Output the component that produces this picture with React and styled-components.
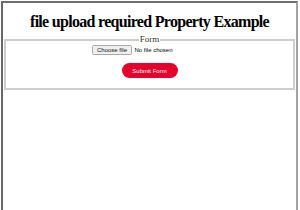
import React from "react";
import styled, { createGlobalStyle } from "styled-components";

const GlobalStyle = createGlobalStyle`
  html, body { margin: 0; padding: 0; background: #ffffff; overflow: hidden; }
  body { font-family: "Liberation Serif", "Times New Roman", serif; }
`;

const Frame = styled.div`
  margin: 1px 2px 0 1px;
  height: 209px;
  box-sizing: border-box;
  border-left: 2px solid #686868;
  border-top: 2px solid #6e6e6e;
  border-right: 2px solid #a3a3a3;
  padding: 0 1px;
`;

const Title = styled.h1`
  margin: 9px 0 3px;
  font-family: "Liberation Serif", "Times New Roman", serif;
  font-weight: 700;
  font-size: 16px;
  letter-spacing: -0.7px;
  line-height: 20px;
  text-align: center;
  white-space: nowrap;
  color: #000;
`;

const Fieldset = styled.fieldset`
  margin: 0;
  padding: 0 10px 10px;
  border: 2px solid #cdcdcd;
  font-size: 6px;
  line-height: 8px;
`;

const Legend = styled.legend`
  margin: 0 auto;
  padding: 0 1px;
  font-family: "Liberation Serif", "Times New Roman", serif;
  font-size: 9px;
  line-height: 9px;
  color: #333;
`;

const FileRow = styled.label`
  display: flex;
  justify-content: center;
  align-items: center;
  gap: 3px;
  margin-top: 1px;
  padding-right: 34px;
  font-family: "Liberation Sans", Arial, sans-serif;
  font-size: 6px;
  color: #000;
  cursor: pointer;
`;

const HiddenInput = styled.input`
  position: absolute;
  width: 1px;
  height: 1px;
  opacity: 0;
  overflow: hidden;
`;

const ChooseButton = styled.span`
  display: inline-block;
  box-sizing: border-box;
  height: 10px;
  line-height: 8px;
  padding: 0 3.5px;
  background: #efefef;
  border: 1px solid #a9a9a9;
  border-radius: 1.5px;
  color: #111;
`;

const SubmitButton = styled.button`
  display: block;
  margin: 8px auto 0;
  width: 56px;
  height: 15px;
  padding: 0;
  border: none;
  border-radius: 8px;
  background: #e6002c;
  color: #ffffff;
  font-family: "Liberation Sans", Arial, sans-serif;
  font-size: 6px;
`;

export default function App() {
  return (
    <>
      <GlobalStyle />
      <Frame>
        <Title>file upload required Property Example</Title>
        <form onSubmit={(e) => e.preventDefault()}>
          <Fieldset>
            <Legend>Form</Legend>
            <FileRow>
              <HiddenInput type="file" required />
              <ChooseButton>Choose file</ChooseButton>
              <span>No file chosen</span>
            </FileRow>
            <SubmitButton type="submit">Submit Form</SubmitButton>
          </Fieldset>
        </form>
      </Frame>
    </>
  );
}
